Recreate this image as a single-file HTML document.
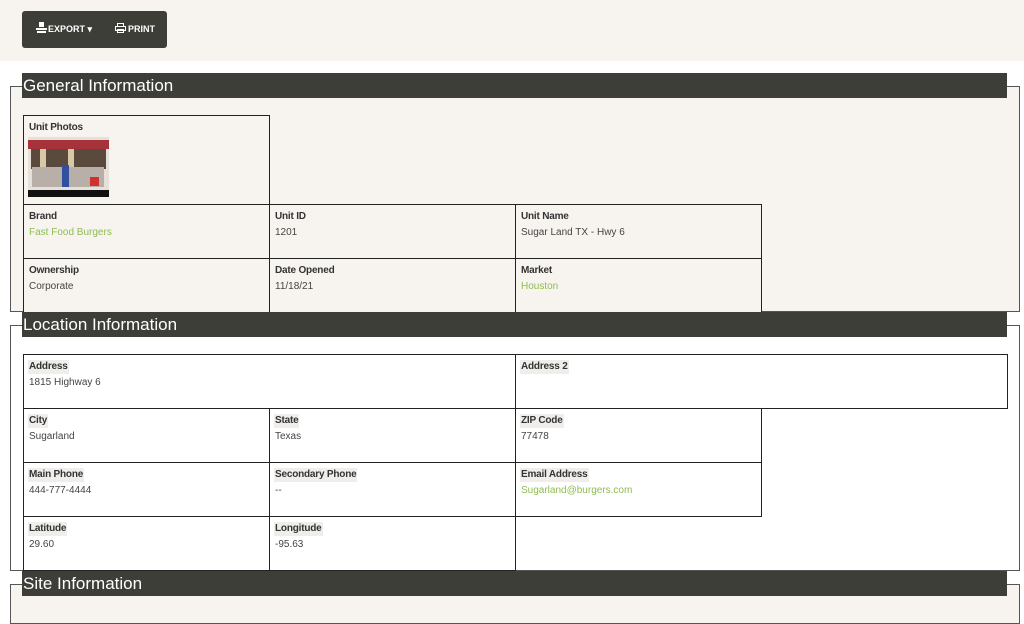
<!DOCTYPE html>
<html><head><meta charset="utf-8"><style>
*{box-sizing:border-box;margin:0;padding:0}
body{width:1024px;height:608px;overflow:hidden;background:#fff;font-family:"Liberation Sans",sans-serif;position:relative}
.a{position:absolute}
.top{left:0;top:0;width:1024px;height:61px;background:#f7f4ef}
.tb{left:22px;top:11px;width:145px;height:37px;background:#3e3e39;border-radius:3px;color:#fff;font-size:9px;font-weight:bold}
.fs{border:1px solid #555}
.hd{background:#3e3e39;color:#fff;font-size:17px;height:25px;line-height:25px;padding-left:1px;width:985px;left:22px}
.c{border:1.5px solid #222;padding:5px 4px;font-size:10px;line-height:12px}
.l{font-weight:bold;color:#333;background:#f0eeea;display:inline-block;padding:1px 1px;margin-bottom:3px;letter-spacing:-0.2px}
.gen .l{background:none}
.v{color:#444;padding-left:1px}
.g{color:#8fbc52;padding-left:1px}
.gen{background:#f7f4ef}
</style></head><body>
<div class="a top"></div>
<div class="a tb">
 <svg class="a" style="left:14px;top:11px" width="11" height="11" viewBox="0 0 11 11"><rect x="3" y="0" width="5" height="5" fill="#fff"/><rect x="0" y="6" width="11" height="2" fill="#fff"/><rect x="1" y="9" width="9" height="2" fill="#fff"/></svg>
 <span class="a" style="left:26px;top:13px">EXPORT ▾</span>
 <svg class="a" style="left:93px;top:12px" width="11" height="10" viewBox="0 0 11 10"><rect x="2.5" y="0.5" width="6" height="3" fill="none" stroke="#fff"/><rect x="0.5" y="3.5" width="10" height="4" fill="none" stroke="#fff"/><rect x="2.5" y="6.5" width="6" height="3" fill="none" stroke="#fff"/></svg>
 <span class="a" style="left:106px;top:13px">PRINT</span>
</div>

<div class="a fs" style="left:10px;top:86px;width:1010px;height:226px;background:#f7f4ef"></div>
<div class="a hd" style="top:73px">General Information</div>
<div class="a c gen" style="left:23px;top:115px;width:247px;height:90px"><span class="l">Unit Photos</span>
 <div style="width:81px;height:60px;margin-top:-1px;position:relative;background:#e6e0d8;overflow:hidden">
  <div class="a" style="left:0;top:3px;width:81px;height:9px;background:#a8323a"></div>
  <div class="a" style="left:3px;top:12px;width:75px;height:20px;background:#5a4a3e"></div>
  <div class="a" style="left:12px;top:12px;width:6px;height:20px;background:#d8c8a8"></div>
  <div class="a" style="left:40px;top:12px;width:6px;height:20px;background:#d8c8a8"></div>
  <div class="a" style="left:4px;top:30px;width:72px;height:20px;background:#b8b0a8"></div>
  <div class="a" style="left:34px;top:28px;width:7px;height:22px;background:#3050a0"></div>
  <div class="a" style="left:62px;top:40px;width:9px;height:9px;background:#d03030"></div>
  <div class="a" style="left:0;top:53px;width:81px;height:7px;background:#111"></div>
 </div></div>

<div class="a c gen" style="left:23px;top:204px;width:247px;height:55px"><span class="l">Brand</span><div class="g">Fast Food Burgers</div></div>
<div class="a c gen" style="left:269px;top:204px;width:247px;height:55px"><span class="l">Unit ID</span><div class="v">1201</div></div>
<div class="a c gen" style="left:515px;top:204px;width:247px;height:55px"><span class="l">Unit Name</span><div class="v">Sugar Land TX - Hwy 6</div></div>
<div class="a c gen" style="left:23px;top:258px;width:247px;height:55px"><span class="l">Ownership</span><div class="v">Corporate</div></div>
<div class="a c gen" style="left:269px;top:258px;width:247px;height:55px"><span class="l">Date Opened</span><div class="v">11/18/21</div></div>
<div class="a c gen" style="left:515px;top:258px;width:247px;height:55px"><span class="l">Market</span><div class="g">Houston</div></div>

<div class="a fs" style="left:10px;top:325px;width:1010px;height:246px;background:#fff"></div>
<div class="a hd" style="top:312px">Location Information</div>
<div class="a c" style="left:23px;top:354px;width:493px;height:55px"><span class="l">Address</span><div class="v">1815 Highway 6</div></div>
<div class="a c" style="left:515px;top:354px;width:493px;height:55px"><span class="l">Address 2</span></div>
<div class="a c" style="left:23px;top:408px;width:247px;height:55px"><span class="l">City</span><div class="v">Sugarland</div></div>
<div class="a c" style="left:269px;top:408px;width:247px;height:55px"><span class="l">State</span><div class="v">Texas</div></div>
<div class="a c" style="left:515px;top:408px;width:247px;height:55px"><span class="l">ZIP Code</span><div class="v">77478</div></div>
<div class="a c" style="left:23px;top:462px;width:247px;height:55px"><span class="l">Main Phone</span><div class="v">444-777-4444</div></div>
<div class="a c" style="left:269px;top:462px;width:247px;height:55px"><span class="l">Secondary Phone</span><div class="v">--</div></div>
<div class="a c" style="left:515px;top:462px;width:247px;height:55px"><span class="l">Email Address</span><div class="g">Sugarland@burgers.com</div></div>
<div class="a c" style="left:23px;top:516px;width:247px;height:55px"><span class="l">Latitude</span><div class="v">29.60</div></div>
<div class="a c" style="left:269px;top:516px;width:247px;height:55px"><span class="l">Longitude</span><div class="v">-95.63</div></div>

<div class="a fs" style="left:10px;top:584px;width:1010px;height:40px;background:#f7f4ef"></div>
<div class="a hd" style="top:571px">Site Information</div>
</body></html>
